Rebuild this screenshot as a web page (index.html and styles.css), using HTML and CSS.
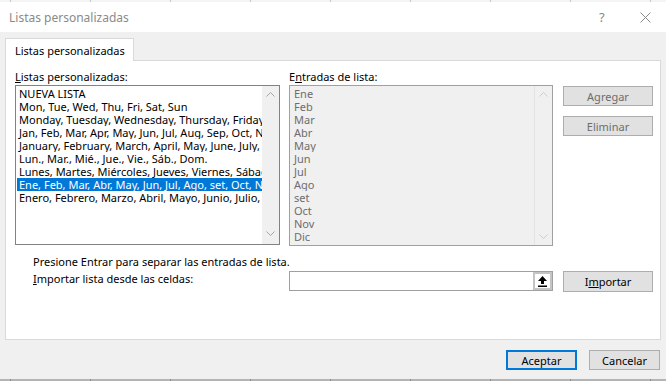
FILE: index.html
```html
<!DOCTYPE html>
<html lang="es">
<head>
  <meta charset="UTF-8">
  <title>Listas personalizadas</title>
  <link rel="stylesheet" href="styles.css">
</head>
<body>

  <div class="grid-strip"></div>

  <div class="titlebar">
    <span class="title">Listas personalizadas</span>
    <span class="help">?</span>
    <span class="close">
      <svg width="11" height="11" viewBox="0 0 11 11"><path d="M0.5 0.5 L10.5 10.5 M10.5 0.5 L0.5 10.5" stroke="#8a8a8a" stroke-width="1" fill="none"/></svg>
    </span>
  </div>

  <div class="dialog">
    <div class="tab">Listas personalizadas</div>

    <div class="panel">
      <div class="lists">
        <div class="group">
          <div class="label"><u>L</u>istas personalizadas:</div>
          <div class="listbox">
            <ul class="items">
              <li>NUEVA LISTA</li>
              <li>Mon, Tue, Wed, Thu, Fri, Sat, Sun</li>
              <li>Monday, Tuesday, Wednesday, Thursday, Friday, Saturday, Sunday</li>
              <li>Jan, Feb, Mar, Apr, May, Jun, Jul, Aug, Sep, Oct, Nov, Dec</li>
              <li>January, February, March, April, May, June, July, August</li>
              <li>Lun., Mar., Mié., Jue., Vie., Sáb., Dom.</li>
              <li>Lunes, Martes, Miércoles, Jueves, Viernes, Sábado, Domingo</li>
              <li class="selected">Ene, Feb, Mar, Abr, May, Jun, Jul, Ago, set, Oct, Nov, Dic</li>
              <li>Enero, Febrero, Marzo, Abril, Mayo, Junio, Julio, Agosto</li>
            </ul>
            <div class="scrollbar">
              <svg width="9" height="5" viewBox="0 0 9 5"><path d="M0.5 4.5 L4.5 0.5 L8.5 4.5" stroke="#a6a6a6" fill="none"/></svg>
              <svg width="9" height="5" viewBox="0 0 9 5"><path d="M0.5 0.5 L4.5 4.5 L8.5 0.5" stroke="#a6a6a6" fill="none"/></svg>
            </div>
          </div>
        </div>

        <div class="group entries">
          <div class="label">E<u>n</u>tradas de lista:</div>
          <div class="listbox disabled">
            <ul class="items">
              <li>Ene</li>
              <li>Feb</li>
              <li>Mar</li>
              <li>Abr</li>
              <li>May</li>
              <li>Jun</li>
              <li>Jul</li>
              <li>Ago</li>
              <li>set</li>
              <li>Oct</li>
              <li>Nov</li>
              <li>Dic</li>
            </ul>
            <div class="scrollbar">
              <svg width="9" height="5" viewBox="0 0 9 5"><path d="M0.5 4.5 L4.5 0.5 L8.5 4.5" stroke="#cdcdcd" fill="none"/></svg>
              <svg width="9" height="5" viewBox="0 0 9 5"><path d="M0.5 0.5 L4.5 4.5 L8.5 0.5" stroke="#cdcdcd" fill="none"/></svg>
            </div>
          </div>
        </div>

        <div class="side-buttons">
          <button class="btn muted">Agregar</button>
          <button class="btn muted">Eliminar</button>
        </div>
      </div>

      <div class="hint">Presione Entrar para separar las entradas de lista.</div>

      <div class="import-row">
        <div class="import-label"><u>I</u>mportar lista desde las celdas:</div>
        <div class="range-input">
          <div class="range-field"></div>
          <div class="range-btn">
            <svg width="9" height="11" viewBox="0 0 9 11"><path d="M4.5 0 L0 5 L3 5 L3 8 L6 8 L6 5 L9 5 Z" fill="#000"/><rect x="0" y="9.5" width="9" height="1.5" fill="#000"/></svg>
          </div>
        </div>
        <button class="btn">I<u>m</u>portar</button>
      </div>
    </div>

    <div class="footer">
      <button class="btn default">Aceptar</button>
      <button class="btn">Cancelar</button>
    </div>
  </div>

  <div class="grid-strip bottom"></div>

</body>
</html>
```

FILE: styles.css
```css
body {
  margin: 0;
  width: 666px;
  height: 381px;
  overflow: hidden;
  background: #f0f0f0;
  font-family: "Noto Sans", sans-serif;
  font-size: 11px;
  color: #000;
}

.grid-strip {
  height: 2px;
  background: repeating-linear-gradient(to right, #c8c8c8 0 1px, #f4f4f4 1px 80px);
  background-position: 10px 0;
}

.grid-strip.bottom {
  background: repeating-linear-gradient(to right, #8c8c8c 0 1px, #b4b4b4 1px 80px);
  background-position: 10px 0;
}

.titlebar {
  height: 30px;
  background: #fff;
  display: flex;
  align-items: center;
  color: #8a8a8a;
}

.title {
  padding-left: 9px;
  flex: 1;
  font-size: 12px;
}

.help {
  width: 41px;
  font-size: 13px;
}

.close {
  width: 26px;
  display: flex;
}

.dialog {
  height: 347px;
  padding: 6px 0 0 5px;
  box-sizing: border-box;
}

.tab {
  position: relative;
  width: 129px;
  height: 23px;
  box-sizing: border-box;
  margin-bottom: -1px;
  padding: 4px 0 0 9px;
  background: #fff;
  border: 1px solid #d9d9d9;
  border-bottom: none;
  white-space: nowrap;
}

.panel {
  width: 656px;
  height: 280px;
  box-sizing: border-box;
  background: #fff;
  border: 1px solid #d9d9d9;
  padding: 8px 0 0 9px;
}

.lists {
  display: flex;
}

.label {
  line-height: 15px;
  margin-bottom: 1px;
  white-space: nowrap;
}

.listbox {
  display: flex;
  width: 265px;
  height: 160px;
  box-sizing: border-box;
  border: 1px solid #828282;
  background: #fff;
}

.items {
  flex: 1;
  min-width: 0;
  list-style: none;
  margin: 0;
  padding: 1px 0 0 1px;
  overflow: hidden;
}

.items li {
  height: 13px;
  line-height: 13px;
  padding-left: 2px;
  white-space: nowrap;
  overflow: hidden;
}

.items li.selected {
  background: #0078d7;
  color: #fff;
}

.scrollbar {
  width: 17px;
  flex: none;
  background: #f0f0f0;
  display: flex;
  flex-direction: column;
  justify-content: space-between;
  align-items: center;
  padding: 6px 0 8px;
}

.entries {
  margin-left: 9px;
}

.entries .listbox {
  width: 264px;
  height: 161px;
  border-color: #a0a0a0;
  background: #f0f0f0;
  color: #6d6d6d;
}

.entries .items {
  padding-left: 2px;
}

.entries .scrollbar {
  border-left: 1px solid #e3e3e3;
  padding-bottom: 6px;
}

.side-buttons {
  display: flex;
  flex-direction: column;
  gap: 10px;
  margin: 17px 0 0 10px;
}

.btn {
  width: 90px;
  height: 20px;
  padding: 0;
  font-family: inherit;
  font-size: 11px;
  color: #000;
  background: #e1e1e1;
  border: 1px solid #adadad;
}

.btn.muted {
  color: #6d6d6d;
}

.hint {
  margin: 8px 0 0 18px;
  line-height: 15px;
}

.import-row {
  display: flex;
  margin-top: 2px;
}

.import-label {
  width: 256px;
  padding-left: 18px;
  line-height: 15px;
}

.range-input {
  display: flex;
  width: 264px;
  height: 20px;
  box-sizing: border-box;
  border: 1px solid #a0a0a0;
}

.range-field {
  flex: 1;
}

.range-btn {
  width: 19px;
  box-sizing: border-box;
  border: 2px solid #c4c4c4;
  display: flex;
  align-items: center;
  justify-content: center;
}

.import-row .btn {
  margin-left: 10px;
  height: 21px;
}

.footer {
  display: flex;
  justify-content: flex-end;
  gap: 12px;
  padding: 10px 6px 0 0;
}

.footer .btn {
  width: 71px;
}

.btn.default {
  border: 2px solid #0078d7;
}
```
